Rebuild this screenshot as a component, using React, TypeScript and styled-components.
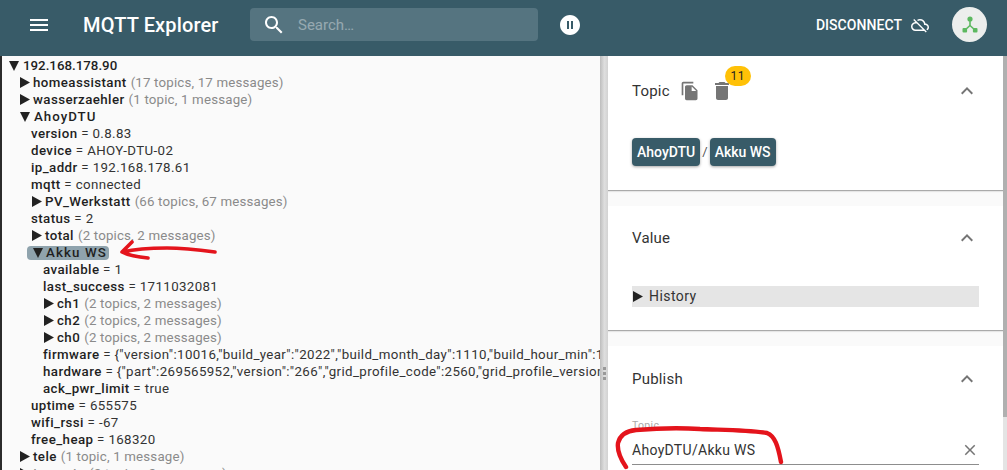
import React from "react";
import styled, { createGlobalStyle } from "styled-components";

const Global = createGlobalStyle`
  html, body { margin: 0; padding: 0; background: #fff; }
  body { font-family: Roboto, "Liberation Sans", sans-serif; }
`;

const Page = styled.div`
  position: relative;
  width: 1007px;
  height: 470px;
  overflow: hidden;
  display: flex;
  flex-direction: column;
  background: #fafafa;
`;

const AppBar = styled.header`
  height: 56px;
  flex: none;
  box-sizing: border-box;
  background: #385b68;
  display: flex;
  align-items: center;
  padding: 0 20px 7px 27px;
  color: #fff;
`;

const MenuBtn = styled.svg`
  width: 24px;
  height: 24px;
  fill: #fff;
  flex: none;
`;

const Title = styled.h1`
  margin: 0 0 0 32px;
  width: 167px;
  flex: none;
  font: 500 20px/24px Roboto, sans-serif;
  letter-spacing: 0.15px;
  color: #fff;
  white-space: nowrap;
`;

const SearchBox = styled.div`
  width: 288px;
  height: 33px;
  flex: none;
  border-radius: 4px;
  background: #557480;
  display: flex;
  align-items: center;
  padding-left: 12px;
  box-sizing: border-box;
  gap: 12px;
`;

const SearchIcon = styled.svg`
  width: 24px;
  height: 24px;
  fill: #fff;
  flex: none;
`;

const SearchText = styled.span`
  font: 400 15px/20px Roboto, sans-serif;
  color: #fff;
  opacity: 0.38;
`;

const PauseIcon = styled.svg`
  width: 24px;
  height: 24px;
  fill: #fff;
  flex: none;
  margin-left: 20px;
`;

const Spacer = styled.div`
  flex: 1;
`;

const Disconnect = styled.div`
  display: flex;
  align-items: center;
  gap: 9px;
  font: 500 14px/20px Roboto, sans-serif;
  letter-spacing: 0.05px;
  color: #fff;
  margin-right: 23px;
`;

const CloudIcon = styled.svg`
  width: 18px;
  height: 18px;
  fill: #fff;
`;

const Avatar = styled.div`
  width: 35px;
  height: 35px;
  border-radius: 50%;
  background: #eceeed;
  display: flex;
  align-items: center;
  justify-content: center;
`;

const Main = styled.div`
  flex: 1;
  min-height: 0;
  display: flex;
`;

const Edge = styled.div`
  width: 2px;
  flex: none;
  background: #2b2b2b;
`;

const TreePanel = styled.div`
  width: 598px;
  flex: none;
  padding-top: 1px;
  overflow: hidden;
  background: #fafafa;
`;

const Row = styled.div<{ $depth: number }>`
  height: 17px;
  padding-left: ${(p) => p.$depth}px;
  display: flex;
  align-items: center;
  font: 400 13.3px/17px Roboto, "Liberation Sans", sans-serif;
  letter-spacing: 0.17px;
  color: #222;
  white-space: nowrap;
`;

const Caret = styled.span<{ $w: number }>`
  width: ${(p) => p.$w}px;
  flex: none;
  display: inline-flex;
`;

const Key = styled.span<{ $ls?: number }>`
  font-weight: 500;
  letter-spacing: ${(p) => p.$ls ?? 0.42}px;
  color: #1f1f1f;
`;

const Summary = styled.span`
  color: #8a8a8a;
  margin-left: 4px;
`;

const Value = styled.span`
  color: #333;
  white-space: pre;
  letter-spacing: 0.37px;
`;

const Selected = styled.span`
  display: inline-flex;
  align-items: center;
  background: #8fa3ad;
  border-radius: 4px;
  padding: 0 2px 0 6px;
  height: 14px;
`;

const Sash = styled.div`
  width: 8px;
  flex: none;
  box-sizing: border-box;
  background: linear-gradient(90deg, #bdbdbd, #dedede 55%, #d2d2d2);
  display: flex;
  flex-direction: column;
  align-items: center;
  justify-content: flex-start;
  gap: 2px;
  padding-top: 311px;
`;

const Dot = styled.span`
  width: 3px;
  height: 3px;
  background: #999;
`;

const Details = styled.div`
  width: 395px;
  flex: none;
  display: flex;
  flex-direction: column;
  background: #fafafa;
  overflow: hidden;
`;

const Section = styled.section<{ $h: number; $last?: boolean }>`
  height: ${(p) => p.$h}px;
  flex: none;
  box-sizing: border-box;
  background: #fff;
  padding: 0 24px;
  margin-bottom: ${(p) => (p.$last ? 0 : 15)}px;
  border-bottom: ${(p) => (p.$last ? "none" : "1px solid #aaa")};
  box-shadow: ${(p) => (p.$last ? "none" : "0 1px 1px rgba(0,0,0,.08)")};
`;

const SectionHead = styled.div<{ $h: number }>`
  height: ${(p) => p.$h}px;
  display: flex;
  align-items: center;
  font: 400 15px/20px Roboto, sans-serif;
  letter-spacing: 0.2px;
  color: #333;
`;

const CopyIcon = styled.svg`
  width: 20px;
  height: 20px;
  fill: #757575;
  margin-left: 10px;
  flex: none;
`;

const TrashWrap = styled.span`
  position: relative;
  display: inline-flex;
  margin-left: 10px;
`;

const TrashIcon = styled.svg`
  width: 24px;
  height: 24px;
  fill: #757575;
  flex: none;
`;

const Badge = styled.span`
  position: absolute;
  left: 15px;
  top: -13px;
  width: 26px;
  height: 20px;
  border-radius: 10px;
  background: #ffc107;
  display: flex;
  align-items: center;
  justify-content: center;
  font: 400 12px/20px Roboto, sans-serif;
  letter-spacing: 0.5px;
  color: #222;
`;

const Chevron = styled.svg`
  width: 24px;
  height: 24px;
  fill: #757575;
  margin-left: auto;
`;

const Chips = styled.div`
  display: flex;
  align-items: center;
  gap: 2px;
  font: 400 13px/16px Roboto, sans-serif;
  color: #555;
  margin-top: 12px;
`;

const Chip = styled.span`
  height: 28px;
  padding: 0 5px;
  display: flex;
  align-items: center;
  border-radius: 4px;
  background: #385b68;
  color: #fff;
  font: 500 14px/16px Roboto, sans-serif;
  box-shadow: 0 1px 3px rgba(0, 0, 0, 0.35);
`;

const History = styled.div`
  height: 21px;
  background: #e5e5e5;
  display: flex;
  align-items: center;
  margin-top: 17px;
  padding-left: 1px;
  font: 400 14px/21px Roboto, sans-serif;
  letter-spacing: 0.45px;
  color: #333;
  gap: 6px;
`;

const Field = styled.div`
  position: relative;
  height: 53px;
  border-bottom: 1px solid #8d8d8d;
  display: flex;
  align-items: flex-end;
  padding-bottom: 5px;
  box-sizing: border-box;
  font: 400 14px/18px Roboto, sans-serif;
  letter-spacing: 0.3px;
  color: #333;
`;

const FieldLabel = styled.span`
  position: absolute;
  left: 0;
  top: 8px;
  font: 400 10.5px/12px Roboto, sans-serif;
  color: #aaa;
`;

const ClearIcon = styled.svg`
  width: 18px;
  height: 18px;
  fill: #757575;
  margin-left: auto;
`;

const Scrollbar = styled.div`
  width: 4px;
  flex: none;
  background: linear-gradient(#b0b0b0 0 361px, #e4e4e4 361px);
`;

const Ink = styled.svg`
  position: absolute;
  inset: 0;
  width: 1007px;
  height: 470px;
  pointer-events: none;
  fill: none;
  stroke: #e4141c;
  stroke-linecap: round;
  stroke-linejoin: round;
`;

const Right = () => (
  <svg width="10" height="11" viewBox="0 0 10 11">
    <path d="M0 0 L10 5.5 L0 11 Z" fill="#222" />
  </svg>
);
const Down = () => (
  <svg width="10" height="10" viewBox="0 0 10 10">
    <path d="M0 0 H10 L5 10 Z" fill="#222" />
  </svg>
);

type Item = {
  d: number;
  k: string;
  v?: string;
  s?: string;
  sel?: boolean;
  ls?: number;
};

const items: Item[] = [
  { d: 7, k: "192.168.178.90", ls: 0 },
  { d: 18, k: "homeassistant", s: "(17 topics, 17 messages)" },
  { d: 18, k: "wasserzaehler", s: "(1 topic, 1 message)" },
  { d: 18, k: "AhoyDTU", ls: 1 },
  { d: 29, k: "version", v: "0.8.83" },
  { d: 29, k: "device", v: "AHOY-DTU-02" },
  { d: 29, k: "ip_addr", v: "192.168.178.61" },
  { d: 29, k: "mqtt", v: "connected" },
  { d: 30, k: "PV_Werkstatt", s: "(66 topics, 67 messages)" },
  { d: 29, k: "status", v: "2" },
  { d: 30, k: "total", s: "(2 topics, 2 messages)" },
  { d: 25, k: "Akku WS", sel: true, ls: 1.1 },
  { d: 41, k: "available", v: "1" },
  { d: 41, k: "last_success", v: "1711032081" },
  { d: 42, k: "ch1", s: "(2 topics, 2 messages)" },
  { d: 42, k: "ch2", s: "(2 topics, 2 messages)" },
  { d: 42, k: "ch0", s: "(2 topics, 2 messages)" },
  { d: 41, k: "firmware", v: '{"version":10016,"build_year":"2022","build_month_day":1110,"build_hour_min":1' },
  { d: 41, k: "hardware", v: '{"part":269565952,"version":"266","grid_profile_code":2560,"grid_profile_version' },
  { d: 41, k: "ack_pwr_limit", v: "true" },
  { d: 29, k: "uptime", v: "655575" },
  { d: 29, k: "wifi_rssi", v: "-67" },
  { d: 29, k: "free_heap", v: "168320" },
  { d: 18, k: "tele", s: "(1 topic, 1 message)" },
  { d: 18, k: "tasmota", s: "(2 topics, 2 messages)" },
];

const TreeRow = ({ item }: { item: Item }) => {
  if (item.v !== undefined) {
    return (
      <Row $depth={item.d}>
        <Key>{item.k}</Key>
        <Value> = {item.v}</Value>
      </Row>
    );
  }
  if (item.s !== undefined) {
    return (
      <Row $depth={item.d}>
        <Caret $w={13}>
          <Right />
        </Caret>
        <Key>{item.k}</Key>
        <Summary>{item.s}</Summary>
      </Row>
    );
  }
  if (item.sel) {
    return (
      <Row $depth={item.d}>
        <Selected>
          <Caret $w={13}>
            <Down />
          </Caret>
          <Key $ls={item.ls}>{item.k}</Key>
        </Selected>
      </Row>
    );
  }
  return (
    <Row $depth={item.d}>
      <Caret $w={14}>
        <Down />
      </Caret>
      <Key $ls={item.ls}>{item.k}</Key>
    </Row>
  );
};

const EXPAND = "M12 8l-6 6 1.41 1.41L12 10.83l4.59 4.58L18 14z";

export default function App() {
  return (
    <Page>
      <Global />
      <AppBar>
        <MenuBtn viewBox="0 0 24 24">
          <path d="M3 18h18v-2H3v2zm0-5h18v-2H3v2zm0-7v2h18V6H3z" />
        </MenuBtn>
        <Title>MQTT Explorer</Title>
        <SearchBox>
          <SearchIcon viewBox="0 0 24 24">
            <path d="M15.5 14h-.79l-.28-.27C15.41 12.59 16 11.11 16 9.5 16 5.91 13.09 3 9.5 3S3 5.91 3 9.5 5.91 16 9.5 16c1.61 0 3.09-.59 4.23-1.57l.27.28v.79l5 4.99L20.49 19l-4.99-5zm-6 0C7.01 14 5 11.99 5 9.5S7.01 5 9.5 5 14 7.01 14 9.5 11.99 14 9.5 14z" />
          </SearchIcon>
          <SearchText>Search…</SearchText>
        </SearchBox>
        <PauseIcon viewBox="0 0 24 24">
          <path d="M12 2C6.48 2 2 6.48 2 12s4.48 10 10 10 10-4.48 10-10S17.52 2 12 2zm-1 14H9V8h2v8zm4 0h-2V8h2v8z" />
        </PauseIcon>
        <Spacer />
        <Disconnect>
          DISCONNECT
          <CloudIcon viewBox="0 0 24 24">
            <path d="M19.35 10.04C18.67 6.59 15.64 4 12 4c-1.48 0-2.85.43-4.01 1.17l1.46 1.46C10.21 6.23 11.08 6 12 6c3.04 0 5.5 2.46 5.5 5.5v.5H19c1.66 0 3 1.34 3 3 0 1.13-.64 2.11-1.56 2.62l1.45 1.45C23.16 18.16 24 16.68 24 15c0-2.64-2.05-4.78-4.65-4.96zM3 5.27l2.75 2.74C2.56 8.15 0 10.77 0 14c0 3.31 2.69 6 6 6h11.73l2 2L21 20.73 4.27 4 3 5.27zM7.73 10l8 8H6c-2.21 0-4-1.79-4-4s1.79-4 4-4h1.73z" />
          </CloudIcon>
        </Disconnect>
        <Avatar>
          <svg width="20" height="20" viewBox="0 0 20 20">
            <path d="M10 5V10.5M10 10.5L4.5 15.5M10 10.5L15.5 15.5" stroke="#5cb860" strokeWidth="1.6" fill="none" />
            <circle cx="10" cy="4" r="2.6" fill="#5cb860" />
            <rect x="2.5" y="13" width="4.6" height="4.6" rx="1" fill="#5cb860" />
            <rect x="12.9" y="13" width="4.6" height="4.6" rx="1" fill="#5cb860" />
          </svg>
        </Avatar>
      </AppBar>
      <Main>
        <Edge />
        <TreePanel>
          {items.map((item) => (
            <TreeRow key={item.k} item={item} />
          ))}
        </TreePanel>
        <Sash>
          <Dot />
          <Dot />
          <Dot />
        </Sash>
        <Details>
          <Section $h={135}>
            <SectionHead $h={70}>
              Topic
              <CopyIcon viewBox="0 0 24 24">
                <path d="M16 1H4c-1.1 0-2 .9-2 2v14h2V3h12V1zm-1 4l6 6v10c0 1.1-.9 2-2 2H7.99C6.89 23 6 22.1 6 21l.01-14c0-1.1.89-2 1.99-2h7zm-1 7h5.5L14 6.5V12z" />
              </CopyIcon>
              <TrashWrap>
                <TrashIcon viewBox="0 0 24 24">
                  <path d="M6 19c0 1.1.9 2 2 2h8c1.1 0 2-.9 2-2V7H6v12zM19 4h-3.5l-1-1h-5l-1 1H5v2h14V4z" />
                </TrashIcon>
                <Badge>11</Badge>
              </TrashWrap>
              <Chevron viewBox="0 0 24 24">
                <path d={EXPAND} />
              </Chevron>
            </SectionHead>
            <Chips>
              <Chip>AhoyDTU</Chip>/<Chip>Akku WS</Chip>
            </Chips>
          </Section>
          <Section $h={125}>
            <SectionHead $h={63}>
              Value
              <Chevron viewBox="0 0 24 24">
                <path d={EXPAND} />
              </Chevron>
            </SectionHead>
            <History>
              <Right />
              History
            </History>
          </Section>
          <Section $h={124} $last>
            <SectionHead $h={66}>
              Publish
              <Chevron viewBox="0 0 24 24">
                <path d={EXPAND} />
              </Chevron>
            </SectionHead>
            <Field>
              <FieldLabel>Topic</FieldLabel>
              AhoyDTU/Akku WS
              <ClearIcon viewBox="0 0 24 24">
                <path d="M19 6.41L17.59 5 12 10.59 6.41 5 5 6.41 10.59 12 5 17.59 6.41 19 12 13.41 17.59 19 19 17.59 13.41 12z" />
              </ClearIcon>
            </Field>
          </Section>
        </Details>
        <Scrollbar />
      </Main>
      <Ink viewBox="0 0 1007 470">
        <path strokeWidth="3.6" d="M132 242 C128 246 125 249 122 252 C128 255 138 257 148 258 M123 252 C135 249 150 248 167 248 C185 248 200 250 215 252" />
        <path strokeWidth="4.4" d="M626 467 C620 458 617 450 618 443 C620 435 626 431 636 430 C660 428 685 428 700 429 C725 430 750 430 767 433 C775 436 778 446 781 462" />
      </Ink>
    </Page>
  );
}
